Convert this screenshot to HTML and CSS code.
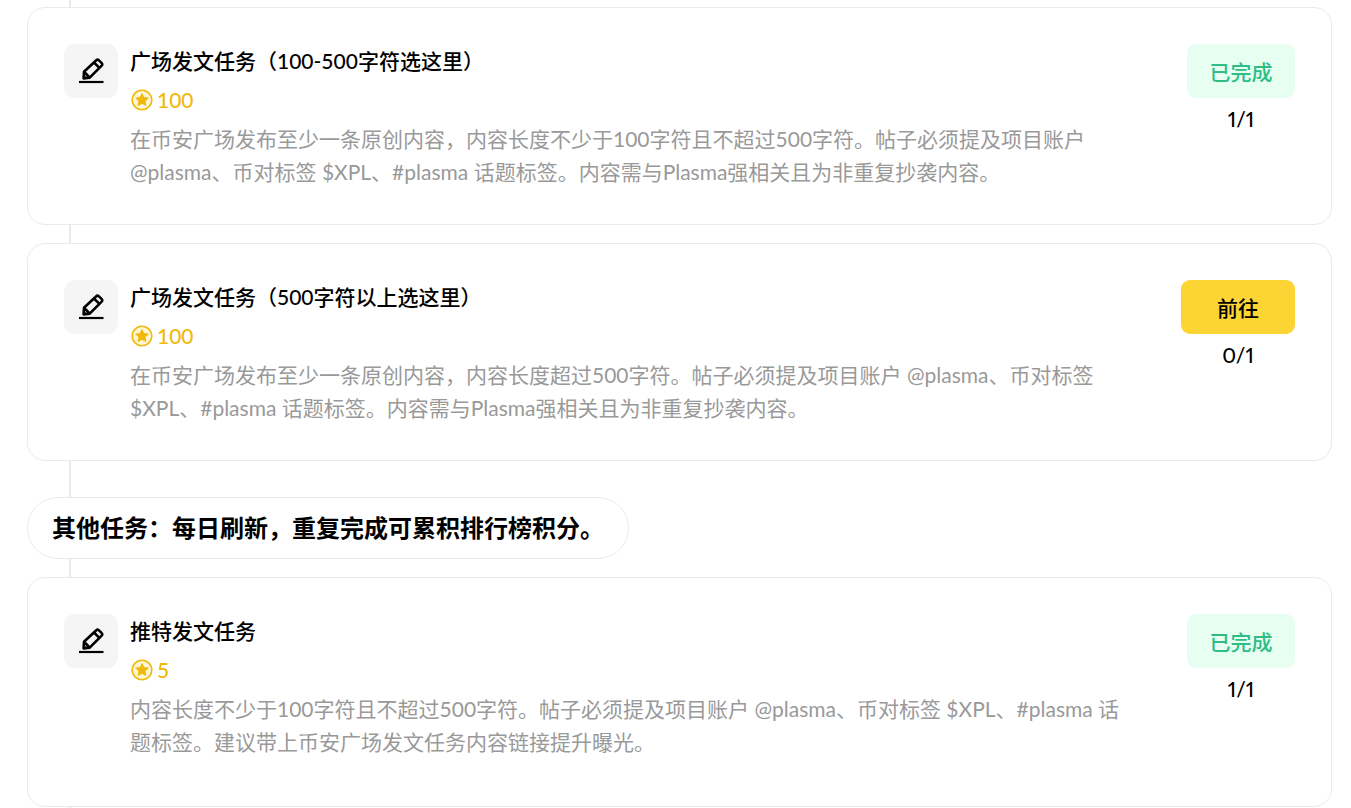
FILE: index.html
```html
<!DOCTYPE html>
<html lang="zh-CN">
<head>
<meta charset="utf-8">
<title>任务</title>
<link rel="stylesheet" href="styles.css">
</head>
<body>
<svg class="defs" width="0" height="0">
<symbol id="pen" viewBox="0 0 54 54"><g fill="none" stroke="#000" stroke-width="2.600" stroke-linejoin="round"><path d="M15 38h24.500" stroke-width="2.200"/><path d="M19.600 34.400l.4-6.600L32.300 16.200q1.200-1 2.400 0l3 3q1.200 1.200 0 2.400L25.700 33.600zM30 18.500l5.400 5.400M20.300 28l5.200 5.500"/><path d="M19.500 30.500l4 3.700-4 .4z" fill="#000" stroke="none"/></g></symbol>
<symbol id="coin" viewBox="0 0 22 22"><circle cx="11" cy="11" r="9.800" fill="#fff6d6" stroke="#f0b90b" stroke-width="1.600"/><path fill="#f0b90b" stroke="#f0b90b" stroke-width="1" stroke-linejoin="round" d="M11 4.600l1.900 4 4.400.5-3.300 3 .9 4.400L11 14.300l-3.900 2.200.9-4.400-3.300-3 4.400-.5z"/></symbol>
</svg>
<main class="timeline">
<article class="card">
<div class="icon"><svg><use href="#pen"/></svg></div>
<div class="body"><h2 class="title">广场发文任务（100-500字符选这里）</h2><div class="points"><svg><use href="#coin"/></svg>100</div><p class="desc">在币安广场发布至少一条原创内容，内容长度不少于100字符且不超过500字符。帖子必须提及项目账户 @plasma、币对标签 $XPL、#plasma 话题标签。内容需与Plasma强相关且为非重复抄袭内容。</p></div>
<div class="status"><button class="btn done">已完成</button><span class="count">1/1</span></div>
</article>
<article class="card">
<div class="icon"><svg><use href="#pen"/></svg></div>
<div class="body"><h2 class="title">广场发文任务（500字符以上选这里）</h2><div class="points"><svg><use href="#coin"/></svg>100</div><p class="desc">在币安广场发布至少一条原创内容，内容长度超过500字符。帖子必须提及项目账户 @plasma、币对标签 $XPL、#plasma 话题标签。内容需与Plasma强相关且为非重复抄袭内容。</p></div>
<div class="status"><button class="btn go">前往</button><span class="count">0/1</span></div>
</article>
<h1 class="section">其他任务：每日刷新，重复完成可累积排行榜积分。</h1>
<article class="card tall">
<div class="icon"><svg><use href="#pen"/></svg></div>
<div class="body"><h2 class="title">推特发文任务</h2><div class="points"><svg><use href="#coin"/></svg>5</div><p class="desc">内容长度不少于100字符且不超过500字符。帖子必须提及项目账户 @plasma、币对标签 $XPL、#plasma 话题标签。建议带上币安广场发文任务内容链接提升曝光。</p></div>
<div class="status"><button class="btn done">已完成</button><span class="count">1/1</span></div>
</article>
</main>
</body>
</html>
```
FILE: styles.css
```css
* { box-sizing: border-box; }
body { margin: 0; background: #fff; color: #000; font-family: Lato, "Noto Sans CJK SC", sans-serif; }
.defs { display: block; height: 0; }
.timeline {
  display: flex; flex-direction: column; align-items: flex-start; gap: 18px;
  padding: 7px 19px 1px 27px;
  background: linear-gradient(#eaeaea, #eaeaea) 69px 0 / 2px 100% no-repeat;
}
.card { display: flex; gap: 12px; width: 100%; padding: 36px; border: 1px solid #eaeaea; border-radius: 18px; background: #fff; }
.tall { padding-bottom: 48px; }
.icon { flex: none; width: 54px; height: 54px; border-radius: 11px; background: #f5f5f5; }
.icon svg { display: block; width: 54px; height: 54px; }
.body { flex: 1; min-width: 0; padding-right: 44px; }
.title { margin: 0; font-size: 21px; line-height: 34px; font-weight: 500; }
.points { display: flex; align-items: center; gap: 4px; height: 44px; padding-left: 1px; font-size: 21px; line-height: 24px; font-weight: 500; color: #f0b90b; }
.points svg { width: 22px; height: 22px; }
.desc { margin: 0; font-size: 21px; line-height: 33px; color: #999; }
.status { flex: none; display: flex; flex-direction: column; align-items: center; gap: 6px; }
.btn { height: 54px; border: 0; border-radius: 9px; font: inherit; font-size: 21px; font-weight: 500; }
.done { min-width: 108px; padding: 0 22px; background: #e6fff1; color: #2ebd85; }
.go { padding: 0 36px; background: #fcd535; color: #000; }
.count { font-size: 21px; line-height: 30px; font-weight: 500; font-variant-numeric: proportional-nums; }
.section { margin: 18px 0 0; padding: 0 24px; border: 1px solid #eaeaea; border-radius: 31px; background: #fff; font-size: 24px; line-height: 60px; font-weight: 700; }
```
